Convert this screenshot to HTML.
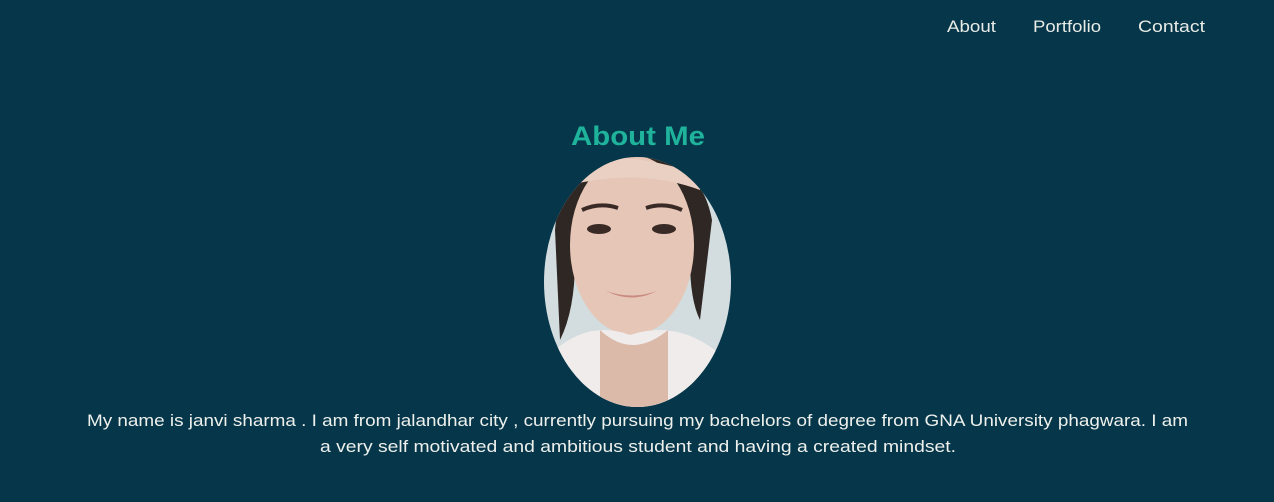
<!DOCTYPE html>
<html><head><meta charset="utf-8"><style>
html,body{margin:0;padding:0;background:#05364a;width:1274px;height:502px;overflow:hidden}
svg{display:block}
text{font-family:"Liberation Sans",sans-serif}
</style></head><body>
<svg width="1274" height="502" viewBox="0 0 1274 502">
<rect width="1274" height="502" fill="#05364a"/>
<g fill="#e8ebe6" font-size="16.5">
<text x="947" y="32" textLength="49" lengthAdjust="spacingAndGlyphs">About</text>
<text x="1033" y="32" textLength="68" lengthAdjust="spacingAndGlyphs">Portfolio</text>
<text x="1138" y="32" textLength="67" lengthAdjust="spacingAndGlyphs">Contact</text>
</g>
<text x="571" y="145" font-size="27" font-weight="bold" fill="#1fb39c" textLength="134" lengthAdjust="spacingAndGlyphs">About Me</text>
<defs><clipPath id="c"><ellipse cx="637.5" cy="282" rx="93.5" ry="125"/></clipPath></defs>
<g clip-path="url(#c)">
<rect x="540" y="150" width="200" height="265" fill="#d3dcdf"/>
<path d="M555 230 Q560 160 630 155 Q700 155 712 220 L700 320 Q690 300 690 260 L575 260 Q575 310 560 340 Z" fill="#2f2724"/>
<ellipse cx="632" cy="245" rx="62" ry="90" fill="#e6c6b6"/>
<path d="M570 160 Q630 150 700 175 L700 190 Q640 168 570 185 Z" fill="#e9d0c2"/>
<path d="M555 350 Q590 320 630 335 Q675 320 715 350 L740 415 L540 415 Z" fill="#efeceb"/>
<path d="M600 330 Q632 360 668 330 L668 415 L600 415 Z" fill="#dcbaa9"/>
<ellipse cx="599" cy="229" rx="12" ry="5" fill="#3a2a26"/>
<ellipse cx="664" cy="229" rx="12" ry="5" fill="#3a2a26"/>
<path d="M582 210 Q600 202 618 208" stroke="#3a2a26" stroke-width="4" fill="none"/>
<path d="M646 208 Q664 202 682 210" stroke="#3a2a26" stroke-width="4" fill="none"/>
<path d="M606 291 Q632 300 657 291 Q632 304 606 291Z" fill="#c98a82"/>
</g>
<g fill="#eef0ec" font-size="16.5">
<text x="87" y="426" textLength="1101" lengthAdjust="spacingAndGlyphs">My name is janvi sharma . I am from jalandhar city , currently pursuing my bachelors of degree from GNA University phagwara. I am</text>
<text x="320" y="452" textLength="636" lengthAdjust="spacingAndGlyphs">a very self motivated and ambitious student and having a created mindset.</text>
</g>
</svg>
</body></html>
